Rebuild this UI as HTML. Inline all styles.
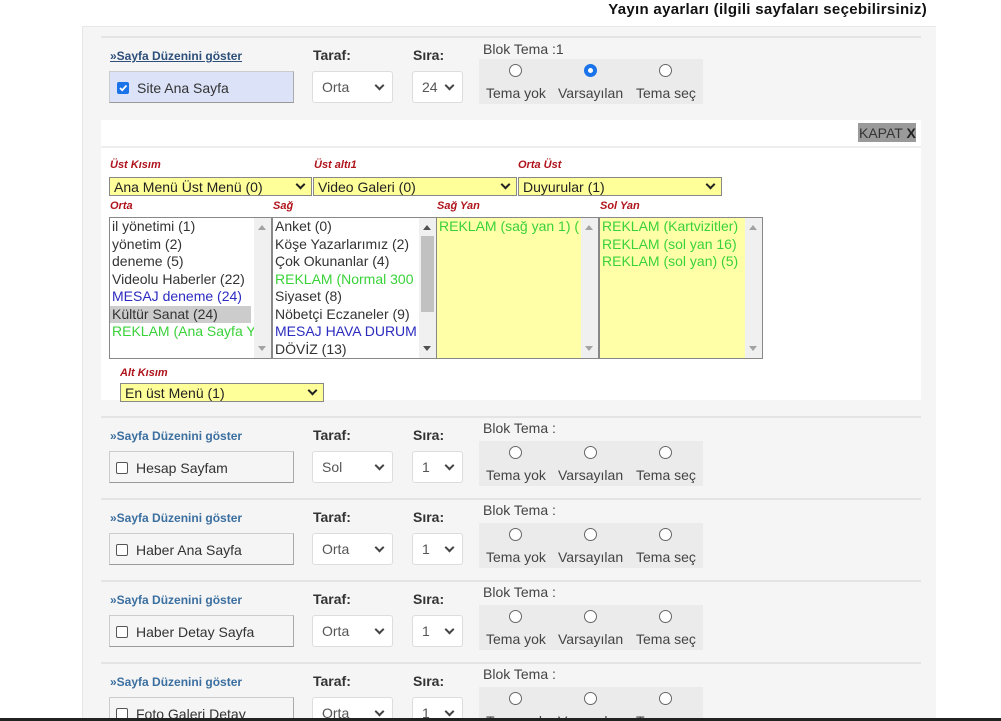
<!DOCTYPE html>
<html style="overflow:hidden;height:721px"><head><meta charset="utf-8"><style>
*{box-sizing:border-box;margin:0;padding:0}
body{width:1001px;height:721px;overflow:hidden;background:#fff;font-family:"Liberation Sans",Arial,sans-serif;position:relative;color:#333}
.a{position:absolute}
#panel{left:82px;top:0;width:854px;height:721px;background:#f5f5f5;border-left:1px solid #e6e6e6}
#hdr{left:82px;top:0;width:854px;height:27px;background:#fff;border-bottom:1px solid #e8e8e8}
.title{right:74px;top:1px;font-weight:bold;font-size:15px;color:#111;font-family:"Liberation Sans",sans-serif;letter-spacing:.3px}
.line{left:101px;width:820px;height:2px;background:#e4e4e4}
.lnk{font-size:12px;font-weight:bold;color:#3b6fa0;font-family:"Liberation Sans",sans-serif}
.lbl{font-size:14px;font-weight:bold;color:#333}
.bt{font-size:14px;color:#444}
.cb{width:185px;height:32px;border:1px solid #ccc;border-bottom:1px solid #999;border-right:1px solid #aaa;font-size:14px;color:#333;padding:8px 0 0 26px}
.cb i{position:absolute;left:6px;top:10px;width:12px;height:12px;border:1px solid #555;border-radius:2px;background:#fff}
.sel{height:32px;background:#fff;border:1px solid #ddd;border-radius:3px;font-size:14px;color:#555;padding:7px 0 0 9px}
.sel b{position:absolute;right:9px;top:10px;width:7px;height:7px;border-right:2px solid #444;border-bottom:2px solid #444;transform:rotate(45deg)}
.rb{width:224px;height:45px;background:#ebebeb}
.rb span{position:absolute;width:13px;height:13px;border:1px solid #666;border-radius:50%;background:#fff;top:5px}
.rb em{position:absolute;font-style:normal;font-size:14px;color:#444;top:26px}
.red{font-size:11px;font-style:italic;font-weight:bold;color:#b0141c}
.ys{height:19px;background:#ffff99;border:1px solid #888;font-size:14px;color:#222;padding:1px 0 0 4px}
.ys b{position:absolute;right:7px;top:3px;width:7px;height:7px;border-right:2px solid #222;border-bottom:2px solid #222;transform:rotate(45deg)}
.lb{height:142px;border:1px solid #888;font-size:14px;line-height:17.5px;padding-left:2px;overflow:hidden;white-space:nowrap}
.sb{position:absolute;right:0;top:0;width:17px;height:100%;background:#f0f0f0}
.sb:before{content:"";position:absolute;left:4px;top:7px;border-left:4px solid transparent;border-right:4px solid transparent;border-bottom:5px solid #a3a3a3}
.sb:after{content:"";position:absolute;left:4px;bottom:7px;border-left:4px solid transparent;border-right:4px solid transparent;border-top:5px solid #a3a3a3}
.dk:before{border-bottom-color:#505050}.dk:after{border-top-color:#505050}
.g{color:#3ad23a}.bl{color:#2b2bc0}
</style></head><body>
<div class="a" id="panel"></div>
<div class="a" id="hdr"></div>
<div class="a title">Yayın ayarları (ilgili sayfaları seçebilirsiniz)</div>

<div class="a line" style="top:36px"></div>
<div class="a lnk" style="left:110px;top:49px;text-decoration:underline;color:#2d4f7a">»Sayfa Düzenini göster</div>
<div class="a lbl" style="left:313px;top:47px">Taraf:</div>
<div class="a lbl" style="left:413px;top:47px">Sıra:</div>
<div class="a bt" style="left:483px;top:41px">Blok Tema :1</div>
<div class="a cb" style="left:109px;top:71px;background:#dce3f8;padding-left:27px">Site Ana Sayfa<i style="background:#1a73e8;border-color:#1a73e8;top:10px;left:7px"><svg width="10" height="10" style="position:absolute;left:0;top:0"><path d="M2 5l2.2 2.2L8.5 2.5" stroke="#fff" stroke-width="1.8" fill="none"/></svg></i></div>
<div class="a sel" style="left:312px;top:71px;width:81px">Orta<b></b></div>
<div class="a sel" style="left:412px;top:71px;width:51px">24<b></b></div>
<div class="a rb" style="left:479px;top:59px"><span style="left:30px"></span><span style="left:105px;border:4px solid #1a73e8;background:#fff;box-shadow:inset 0 0 0 1px #fff"></span><span style="left:180px"></span><em style="left:7px">Tema yok</em><em style="left:79px">Varsayılan</em><em style="left:157px">Tema seç</em></div>

<div class="a" style="left:101px;top:120px;width:820px;height:280px;background:#fff"></div>
<div class="a" style="left:101px;top:146px;width:820px;height:2px;background:#eee"></div>
<div class="a" style="left:858px;top:123px;width:58px;height:19px;background:#9a9a9a;font-size:14px;color:#333;padding:2px 0 0 1px">KAPAT <b style="color:#222">X</b></div>
<div class="a red" style="left:110px;top:159px">Üst Kısım</div>
<div class="a red" style="left:314px;top:159px">Üst altı1</div>
<div class="a red" style="left:518px;top:159px">Orta Üst</div>
<div class="a ys" style="left:109px;top:177px;width:203px">Ana Menü Üst Menü (0)<b></b></div>
<div class="a ys" style="left:313px;top:177px;width:204px">Video Galeri (0)<b></b></div>
<div class="a ys" style="left:518px;top:177px;width:204px">Duyurular (1)<b></b></div>
<div class="a red" style="left:110px;top:200px">Orta</div>
<div class="a red" style="left:273px;top:200px">Sağ</div>
<div class="a red" style="left:437px;top:200px">Sağ Yan</div>
<div class="a red" style="left:600px;top:200px">Sol Yan</div>
<div class="a lb" style="left:109px;top:217px;width:163px;background:#fff"><div class="sb"></div>il yönetimi (1)<br>yönetim (2)<br>deneme (5)<br>Videolu Haberler (22)<br><span class="bl">MESAJ deneme (24)</span><br><span style="background:#ccc;display:inline-block;width:141px;margin-left:-2px;padding-left:2px">Kültür Sanat (24)</span><br><span class="g">REKLAM (Ana Sayfa Y</span></div>
<div class="a lb" style="left:272px;top:217px;width:165px;background:#fff"><div class="sb dk"><div style="position:absolute;left:2px;top:18px;width:13px;height:76px;background:#c1c1c1"></div></div>Anket (0)<br>Köşe Yazarlarımız (2)<br>Çok Okunanlar (4)<br><span class="g">REKLAM (Normal 300</span><br>Siyaset (8)<br>Nöbetçi Eczaneler (9)<br><span class="bl">MESAJ HAVA DURUM</span><br>DÖVİZ (13)</div>
<div class="a lb" style="left:436px;top:217px;width:163px;background:#ffffa8"><div class="sb"></div><span class="g">REKLAM (sağ yan 1) (</span></div>
<div class="a lb" style="left:599px;top:217px;width:164px;background:#ffffa8"><div class="sb"></div><span class="g">REKLAM (Kartvizitler)<br>REKLAM (sol yan 16)<br>REKLAM (sol yan) (5)</span></div>
<div class="a red" style="left:120px;top:367px">Alt Kısım</div>
<div class="a ys" style="left:120px;top:383px;width:204px">En üst Menü (1)<b></b></div>

<div id="rows"></div>
<script>
var rs=[[416,"Hesap Sayfam","Sol"],[498,"Haber Ana Sayfa","Orta"],[580,"Haber Detay Sayfa","Orta"],[662,"Foto Galeri Detay","Orta"]];
var h="";
rs.forEach(function(r){var y=r[0];
h+='<div class="a line" style="top:'+y+'px"></div>'+
'<div class="a lnk" style="left:110px;top:'+(y+13)+'px">»Sayfa Düzenini göster</div>'+
'<div class="a lbl" style="left:313px;top:'+(y+11)+'px">Taraf:</div>'+
'<div class="a lbl" style="left:413px;top:'+(y+11)+'px">Sıra:</div>'+
'<div class="a bt" style="left:483px;top:'+(y+4)+'px">Blok Tema :</div>'+
'<div class="a cb" style="left:109px;top:'+(y+35)+'px">'+r[1]+'<i></i></div>'+
'<div class="a sel" style="left:312px;top:'+(y+35)+'px;width:81px">'+r[2]+'<b></b></div>'+
'<div class="a sel" style="left:412px;top:'+(y+35)+'px;width:51px">1<b></b></div>'+
'<div class="a rb" style="left:479px;top:'+(y+25)+'px"><span style="left:30px"></span><span style="left:105px"></span><span style="left:180px"></span><em style="left:7px">Tema yok</em><em style="left:79px">Varsayılan</em><em style="left:157px">Tema seç</em></div>';});
document.getElementById("rows").innerHTML=h;
</script>
<div class="a" style="left:0;top:718px;width:1001px;height:3px;background:#222"></div>
</body></html>
